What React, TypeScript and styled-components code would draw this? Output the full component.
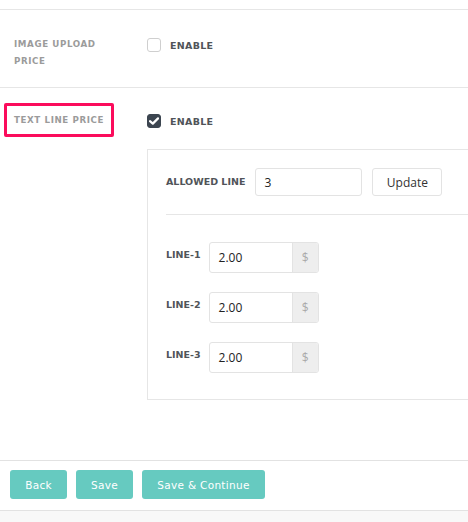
import React from 'react';
import styled, { createGlobalStyle } from 'styled-components';

const GlobalStyle = createGlobalStyle`
  body {
    margin: 0;
    background: #ffffff;
    overflow: hidden;
    font-family: "DejaVu Sans", "Liberation Sans", sans-serif;
  }
`;

const Page = styled.div`
  width: 468px;
  overflow: hidden;
  padding-top: 9px;
`;

const SettingRow = styled.div<{ $top: number; $bottom: number }>`
  display: flex;
  align-items: flex-start;
  gap: 33px;
  padding: ${p => p.$top}px 0 ${p => p.$bottom}px 4px;
  border-top: 1px solid #e6e6e6;
`;

const Label = styled.div<{ $highlight?: boolean }>`
  width: 110px;
  box-sizing: border-box;
  flex-shrink: 0;
  padding: 6px 2px 5px 7px;
  border: 3px solid ${p => (p.$highlight ? '#fb0c5c' : 'transparent')};
  border-radius: 2px;
  font-size: 8.7px;
  font-weight: bold;
  line-height: 17px;
  letter-spacing: 0.6px;
  color: #9b9b9b;
  text-transform: uppercase;
`;

const Field = styled.div`
  display: flex;
  flex-direction: column;
  flex: 1;
`;

const CheckLine = styled.label`
  display: flex;
  align-items: center;
  gap: 9px;
  height: 36px;
  font-size: 9.5px;
  font-weight: bold;
  letter-spacing: 0.3px;
  color: #505459;
`;

const Box = styled.span<{ $checked?: boolean }>`
  width: 14px;
  height: 14px;
  box-sizing: border-box;
  border-radius: 3px;
  border: 1px solid ${p => (p.$checked ? '#3c4550' : '#cfcfcf')};
  background: ${p => (p.$checked ? '#3c4550' : '#ffffff')};
  display: flex;
  align-items: center;
  justify-content: center;
`;

const Panel = styled.div`
  width: 340px;
  margin-top: 10px;
  border: 1px solid #e6e6e6;
  padding: 18px 0 26px 18px;
`;

const AllowedRow = styled.div`
  display: flex;
  align-items: center;
  gap: 10px;
  padding-bottom: 18px;
  border-bottom: 1px solid #e6e6e6;
  margin-bottom: 27px;
`;

const FieldLabel = styled.span<{ $top?: number }>`
  font-size: 9.5px;
  font-weight: bold;
  color: #505459;
  padding-top: ${p => p.$top ?? 0}px;
  line-height: 14px;
`;

const TextInput = styled.div<{ $w: number; $h: number }>`
  width: ${p => p.$w}px;
  height: ${p => p.$h}px;
  box-sizing: border-box;
  border: 1px solid #e3e3e3;
  border-radius: 3px;
  padding-left: 8px;
  display: flex;
  align-items: center;
  font-family: "Open Sans", sans-serif;
  font-size: 12px;
  color: #222;
`;

const UpdateButton = styled.div`
  width: 70px;
  height: 28px;
  box-sizing: border-box;
  border: 1px solid #e3e3e3;
  border-radius: 3px;
  display: flex;
  align-items: center;
  justify-content: center;
  font-family: "Open Sans", sans-serif;
  font-size: 12px;
  color: #333;
`;

const LineList = styled.div`
  display: flex;
  flex-direction: column;
  gap: 19px;
`;

const LineRow = styled.div`
  display: flex;
  align-items: flex-start;
  gap: 8px;
`;

const PriceGroup = styled.div`
  display: flex;
  height: 31px;
  border: 1px solid #e3e3e3;
  border-radius: 3px;
  box-sizing: border-box;
  overflow: hidden;
`;

const PriceInput = styled.div`
  width: 82px;
  padding-left: 9px;
  box-sizing: border-box;
  display: flex;
  align-items: center;
  font-family: "Open Sans", sans-serif;
  font-size: 12px;
  color: #222;
`;

const Addon = styled.div`
  width: 25px;
  background: #eeeeee;
  border-left: 1px solid #e3e3e3;
  display: flex;
  align-items: center;
  justify-content: center;
  font-family: "Open Sans", sans-serif;
  font-size: 12px;
  color: #aaaaaa;
`;

const Footer = styled.div`
  border-top: 1px solid #e2e2e2;
  border-bottom: 1px solid #e2e2e2;
  padding: 9px 10px 11px;
  display: flex;
  gap: 9px;
`;

const ActionButton = styled.div<{ $w: number }>`
  width: ${p => p.$w}px;
  height: 29px;
  border-radius: 3px;
  background: #66cac0;
  color: #ffffff;
  display: flex;
  align-items: center;
  justify-content: center;
  font-family: "DejaVu Sans", sans-serif;
  font-size: 10.5px;
  letter-spacing: 0.3px;
`;

const BottomStrip = styled.div`
  height: 20px;
  background: #f8f8f8;
`;

const Check = () => (
  <svg width="10" height="8" viewBox="0 0 10 8">
    <path d="M1 4.2 L3.8 6.6 L9 1.4" fill="none" stroke="#fff" strokeWidth="2.2" strokeLinecap="round" strokeLinejoin="round" />
  </svg>
);

const lines = ['LINE-1', 'LINE-2', 'LINE-3'];

export default function App() {
  return (
    <Page>
      <GlobalStyle />
      <SettingRow $top={17} $bottom={9}>
        <Label>Image Upload Price</Label>
        <Field>
          <CheckLine>
            <Box />
            ENABLE
          </CheckLine>
        </Field>
      </SettingRow>
      <SettingRow $top={15} $bottom={60}>
        <Label $highlight>Text Line Price</Label>
        <Field>
          <CheckLine>
            <Box $checked>
              <Check />
            </Box>
            ENABLE
          </CheckLine>
          <Panel>
            <AllowedRow>
              <FieldLabel>ALLOWED LINE</FieldLabel>
              <TextInput $w={107} $h={28}>3</TextInput>
              <UpdateButton>Update</UpdateButton>
            </AllowedRow>
            <LineList>
              {lines.map(l => (
                <LineRow key={l}>
                  <FieldLabel $top={6}>{l}</FieldLabel>
                  <PriceGroup>
                    <PriceInput>2.00</PriceInput>
                    <Addon>$</Addon>
                  </PriceGroup>
                </LineRow>
              ))}
            </LineList>
          </Panel>
        </Field>
      </SettingRow>
      <Footer>
        <ActionButton $w={57}>Back</ActionButton>
        <ActionButton $w={57}>Save</ActionButton>
        <ActionButton $w={123}>Save &amp; Continue</ActionButton>
      </Footer>
      <BottomStrip />
    </Page>
  );
}
